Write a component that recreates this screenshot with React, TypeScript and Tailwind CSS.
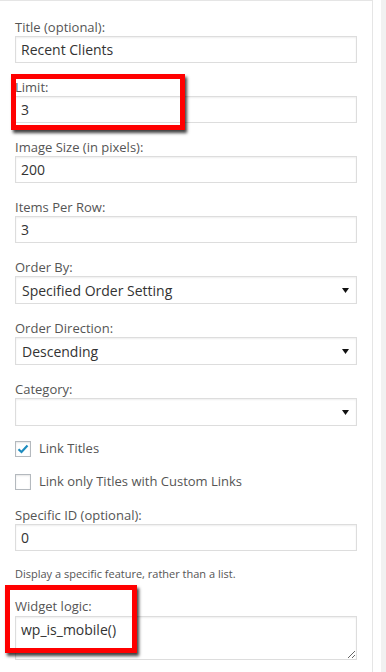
import React from 'react';

const font = { fontFamily: '"Open Sans", "Noto Sans", sans-serif' };

// plain text field with a label above it
const TextField = ({ label, value }: { label: string; value: string }) => (
  <div className="mb-[15px]">
    <label className="block text-[13px] leading-[18px] text-[#555]">{label}</label>
    <input
      readOnly
      value={value}
      className="block h-[27px] w-[342px] border border-[#ddd] bg-white px-[5px] text-[14px] text-[#333] shadow-[inset_0_1px_2px_rgba(0,0,0,0.07)] outline-none"
    />
  </div>
);

const SelectField = ({ label, value }: { label: string; value: string }) => (
  <div className="mb-[15px]">
    <label className="block text-[13px] leading-[18px] text-[#555]">{label}</label>
    <div className="flex h-[28px] w-[342px] items-center justify-between border border-[#ddd] bg-white pl-[6px] pr-[7px] text-[14px] text-[#333] shadow-[inset_0_1px_2px_rgba(0,0,0,0.07)]">
      <span>{value}</span>
      <svg width="7" height="5" viewBox="0 0 7 5" className="mt-[1px]">
        <path d="M0 0H7L3.5 5Z" fill="#111" />
      </svg>
    </div>
  </div>
);

const Checkbox = ({ label, checked }: { label: string; checked?: boolean }) => (
  <div className="flex h-[16px] items-center">
    <span className="flex h-[16px] w-[16px] items-center justify-center border border-[#b4b9be] bg-white shadow-[inset_0_1px_2px_rgba(0,0,0,0.1)]">
      {checked && (
        <svg width="12" height="10" viewBox="0 0 12 10">
          <path d="M1.5 5.2L4.5 8L10.5 1.5" stroke="#1e8cbe" strokeWidth="2.2" fill="none" />
        </svg>
      )}
    </span>
    <span className="ml-[8px] text-[13px] text-[#555]">{label}</span>
  </div>
);

export default function App() {
  return (
    <div className="relative flex h-[672px] w-[386px] overflow-hidden bg-white" style={font}>
      <div className="w-[373px] shrink-0 border-r border-t border-[#e5e5e5] pl-[15px] pt-[17px]">
        <TextField label="Title (optional):" value="Recent Clients" />
        <TextField label="Limit:" value="3" />
        <TextField label="Image Size (in pixels):" value="200" />
        <TextField label="Items Per Row:" value="3" />
        <SelectField label="Order By:" value="Specified Order Setting" />
        <SelectField label="Order Direction:" value="Descending" />
        <SelectField label="Category:" value="" />

        <div className="mt-[1px] flex flex-col gap-[17px]">
          <Checkbox label="Link Titles" checked />
          <Checkbox label="Link only Titles with Custom Links" />
        </div>

        <div className="mt-[16px]">
          <label className="block text-[13px] leading-[18px] text-[#555]">Specific ID (optional):</label>
          <input
            readOnly
            value="0"
            className="block h-[27px] w-[342px] border border-[#ddd] bg-white px-[5px] text-[14px] text-[#333] shadow-[inset_0_1px_2px_rgba(0,0,0,0.07)] outline-none"
          />
        </div>

        <p className="mt-[14px] text-[11px] leading-[18px] text-[#555]">
          Display a specific feature, rather than a list.
        </p>

        <div className="mt-[14px]">
          <label className="block text-[13px] leading-[19px] text-[#555]">Widget logic:</label>
          <textarea
            readOnly
            defaultValue="wp_is_mobile()"
            className="block h-[44px] w-[342px] border border-[#ddd] bg-white px-[5px] py-[2px] text-[14px] text-[#333] shadow-[inset_0_1px_2px_rgba(0,0,0,0.07)] outline-none"
          />
        </div>
      </div>
      <div className="w-[8px] shrink-0 bg-white" />
      <div className="flex-1 bg-[#f1f1f1]" />

      {/* red highlight boxes */}
      <div className="absolute left-[11px] top-[74px] h-[56px] w-[174px] border-[5px] border-[#f00] shadow-[2px_3px_3px_rgba(0,0,0,0.75)]" />
      <div className="absolute left-[5px] top-[585px] h-[68px] w-[132px] border-[5px] border-[#f00] shadow-[2px_3px_3px_rgba(0,0,0,0.75)]" />
    </div>
  );
}
